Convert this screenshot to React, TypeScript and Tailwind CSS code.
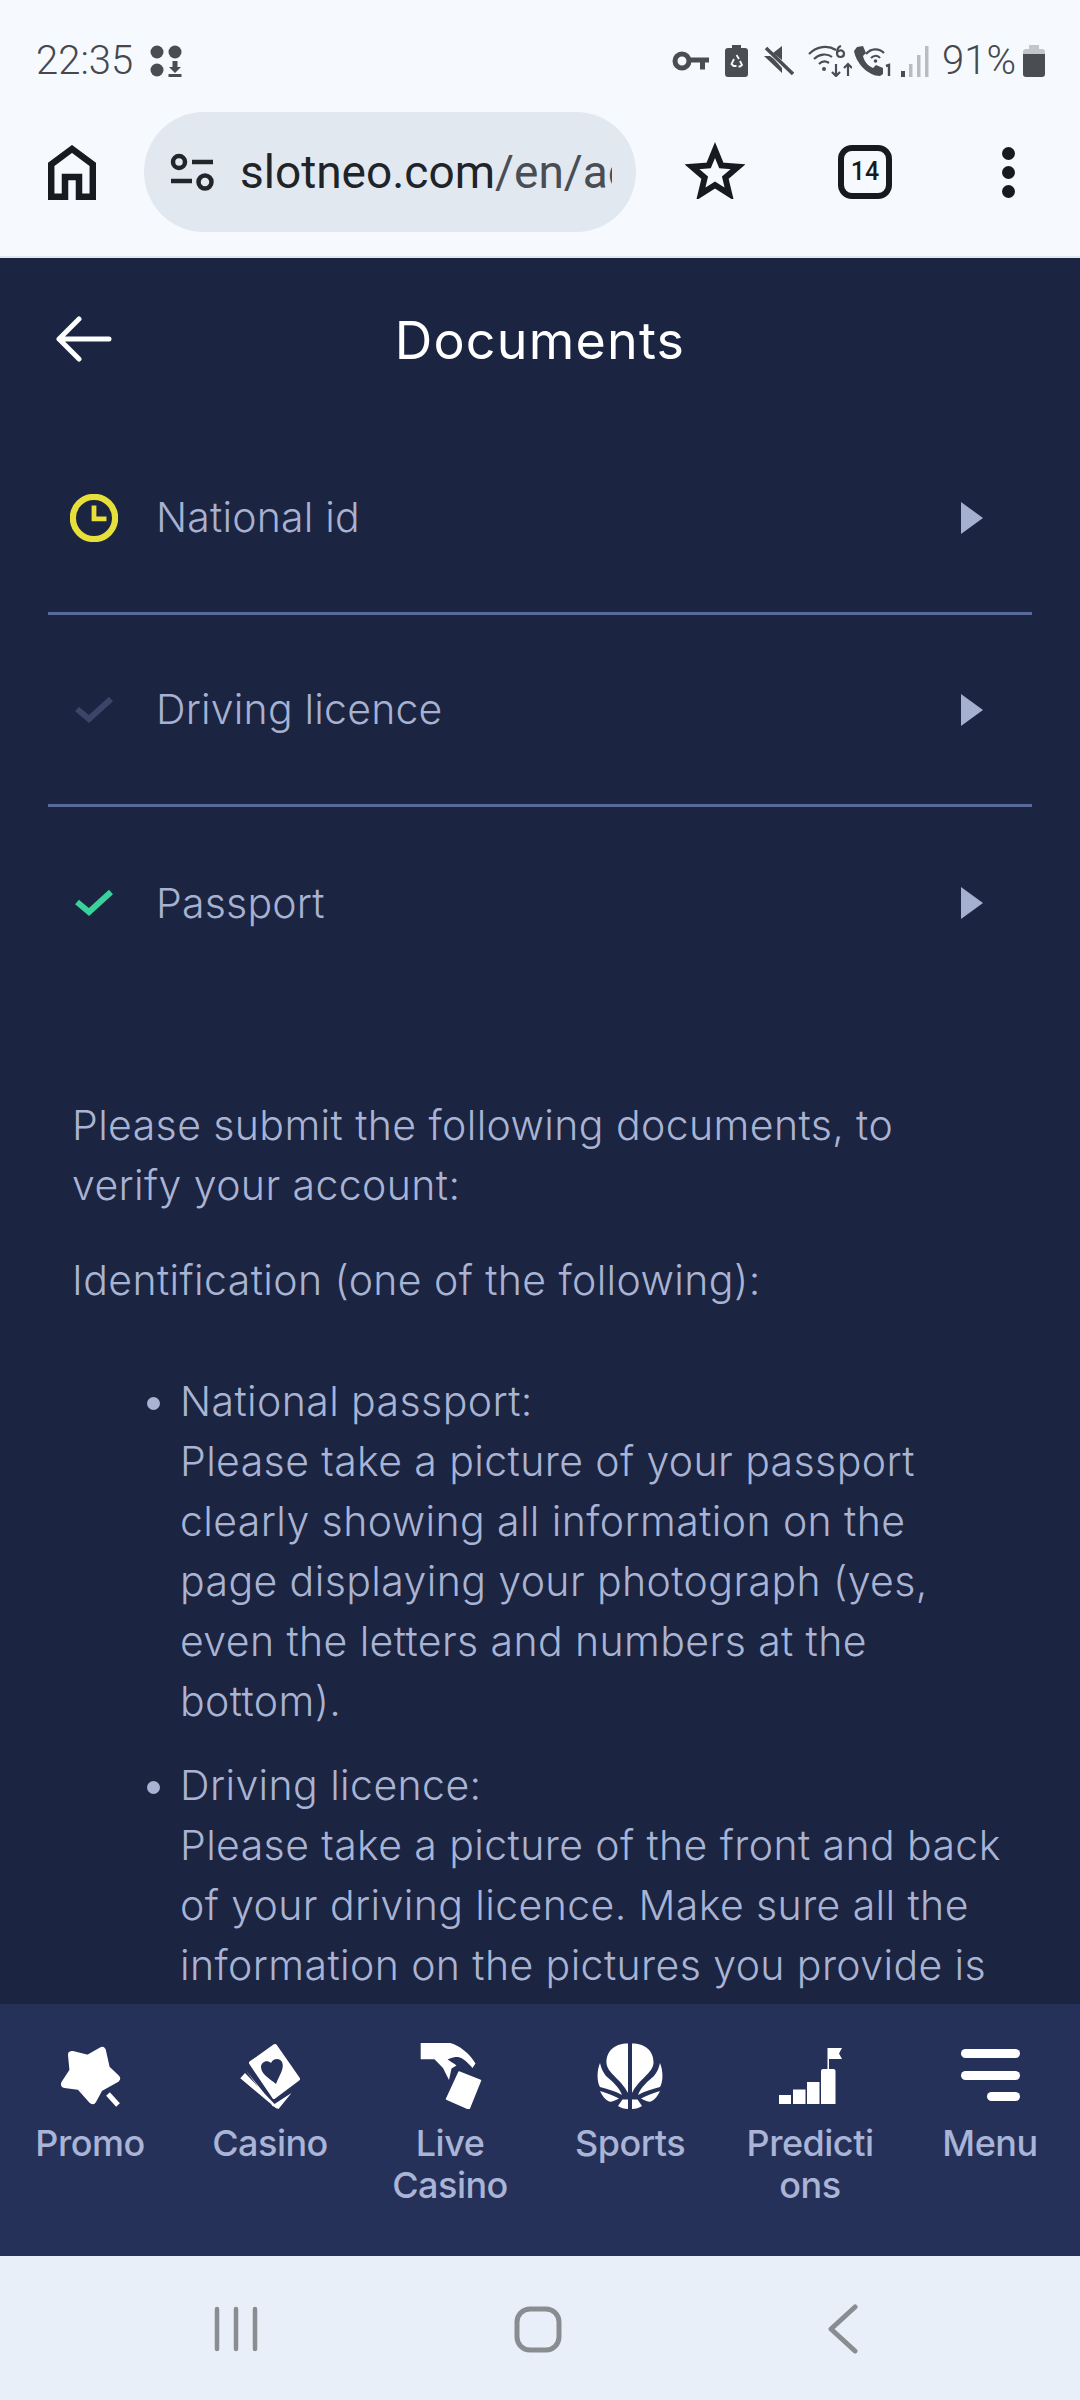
import React from 'react';

const bodyFont = "font-['Inter',sans-serif]";

function StatusLeft() {
  return (
    <div className="flex items-center">
      <span className="font-['Roboto',sans-serif] text-[40px] font-light leading-none text-[#45494e]">22:35</span>
      <svg className="ml-[16px]" width="34" height="32" viewBox="0 0 32 32" fill="#4a4d52">
        <circle cx="7" cy="7" r="6.5" />
        <circle cx="25" cy="7" r="6.5" />
        <circle cx="7" cy="25" r="6.5" />
        <path d="M22.5 16h5v6h3.5l-6 6-6-6h3.5zM18.5 29h13v3h-13z" />
      </svg>
    </div>
  );
}

function StatusRight() {
  return (
    <div className="flex items-center">
      {/* key */}
      <svg width="38" height="22" viewBox="0 0 38 22" fill="none" stroke="#4a4d52">
        <circle cx="10" cy="11" r="7" strokeWidth="5" />
        <path d="M17 7.500h20v5h-4v7h-5v-7h-11z" fill="#4a4d52" strokeWidth="0" />
      </svg>
      {/* battery saver */}
      <svg className="ml-[15px]" width="23" height="32" viewBox="0 0 23 32">
        <path d="M7 0h9v3h4a3 3 0 0 1 3 3v23a3 3 0 0 1-3 3H3a3 3 0 0 1-3-3V6a3 3 0 0 1 3-3h4z" fill="#4a4d52" />
        <path d="M11.500 10l2.500 4M9 14l-2.500 5 2 2h3M15 16l2 4-2 1.500h-1.500" fill="none" stroke="#f6f9fe" strokeWidth="1.800" />
      </svg>
      {/* mute */}
      <svg className="ml-[16px]" width="30" height="30" viewBox="0 0 30 30">
        <path d="M0 10h6l4 3 8 9v5zM9 7l9-7v14z" fill="#4a4d52" />
        <path d="M2 2l27 26" stroke="#4a4d52" strokeWidth="3.500" />
      </svg>
      {/* wifi with data */}
      <svg className="ml-[14px]" width="44" height="32" viewBox="0 0 44 32" fill="none" stroke="#4a4d52" strokeWidth="2.200">
        <path d="M1 9C9 1 20 0 28 5M6 14c5-5 13-6 18-2M11 19c3-3 7-3 10-1" />
        <circle cx="16" cy="24" r="2" fill="#4a4d52" stroke="none" />
        <path d="M33 1c-3 1-4 4-4 7 0 3 1.500 4 3.500 4s3.500-1.500 3.500-3.500S34 5 32 5.500 29 7 29 8" />
        <path d="M28 19v12M24 27l4 4 4-4M40 31V19M36 23l4-4 4 4" />
      </svg>
      {/* wifi call */}
      <svg className="ml-[2px]" width="37" height="32" viewBox="0 0 37 32">
        <path d="M3 2l6-1 3 7-3 3c1 5 5 10 10 12l3-3 7 3 0 6-3 2C14 31 2 18 0 6z" fill="#4a4d52" />
        <path d="M12 9c5-6 13-6 18-1M17 13c3-3 7-3 9 0" fill="none" stroke="#4a4d52" strokeWidth="2.200" />
        <circle cx="21.500" cy="16" r="1.800" fill="#4a4d52" />
        <path d="M32 21l3-1v11" fill="none" stroke="#4a4d52" strokeWidth="2.400" />
      </svg>
      {/* signal */}
      <svg className="ml-[10px]" width="28" height="31" viewBox="0 0 28 31">
        <rect x="0" y="25" width="4" height="6" fill="#4a4d52" />
        <rect x="8" y="18" width="3.500" height="13" fill="#b9bdc2" />
        <rect x="16" y="9" width="3.500" height="22" fill="#b9bdc2" />
        <rect x="24" y="0" width="3.500" height="31" fill="#b9bdc2" />
      </svg>
      <span className="ml-[13px] font-['Roboto',sans-serif] text-[40px] font-light leading-none text-[#45494e]">91%</span>
      {/* battery */}
      <svg className="ml-[7px]" width="22" height="32" viewBox="0 0 22 32">
        <path d="M6 0h10v4H6z" fill="#c3c6ca" />
        <path d="M3 4h16a3 3 0 0 1 3 3v3H0V7a3 3 0 0 1 3-3z" fill="#c3c6ca" />
        <path d="M0 9h22v20a3 3 0 0 1-3 3H3a3 3 0 0 1-3-3z" fill="#4a4d52" />
      </svg>
    </div>
  );
}

function BrowserBar() {
  return (
    <div className="flex h-[144px] items-start pl-[48px]">
      <svg className="mt-[33px]" width="48" height="55" viewBox="0 0 48 55" fill="none" stroke="#171b20" strokeWidth="6.500">
        <path d="M3.200 51.800V19.500L24 4l20.800 15.500v32.300H31V32H17v19.800z" />
      </svg>
      <div className="ml-[48px] flex h-[120px] w-[492px] items-center rounded-full bg-[#e2e8f0] pl-[26px] pr-[24px]">
        <svg className="shrink-0" width="44" height="38" viewBox="0 0 44 38" fill="none" stroke="#22262b" strokeWidth="4.500">
          <circle cx="9" cy="9" r="6" />
          <path d="M22 9h21M1 28h21" />
          <circle cx="35" cy="29" r="6.500" />
        </svg>
        <div className="ml-[26px] overflow-hidden whitespace-nowrap font-['Roboto',sans-serif] text-[46px] leading-none text-[#202428]">
          slotneo.com<span className="text-[#494e55]">/en/account/documents</span>
        </div>
      </div>
      <svg className="ml-[49px] mt-[29px]" width="60" height="58" viewBox="0 0 60 58" fill="none" stroke="#171b20" strokeWidth="6">
        <path d="M30 9l6.300 15.500 16.700 1.300-12.700 10.900 3.900 16.300L30 44l-14.200 9 3.900-16.300L7 25.800l16.700-1.300z" />
      </svg>
      <div className="ml-[93px] mt-[33px] flex h-[54px] w-[54px] items-center justify-center rounded-[14px] border-[6px] border-[#171b20] font-['Roboto',sans-serif] text-[25px] font-medium text-[#171b20]">
        14
      </div>
      <div className="ml-[110px] mt-[35px] flex flex-col gap-[6.500px]">
        <div className="h-[12.500px] w-[12.500px] rounded-full bg-[#171b20]" />
        <div className="h-[12.500px] w-[12.500px] rounded-full bg-[#171b20]" />
        <div className="h-[12.500px] w-[12.500px] rounded-full bg-[#171b20]" />
      </div>
    </div>
  );
}

function Triangle() {
  return (
    <svg width="22" height="32" viewBox="0 0 22 32" fill="#a5afd0">
      <path d="M0 0l22 16L0 32z" />
    </svg>
  );
}

function ClockIcon() {
  return (
    <svg width="48" height="48" viewBox="0 0 50 50" fill="none" stroke="#e7e03a">
      <circle cx="25" cy="25" r="22" strokeWidth="6.500" />
      <path d="M25 12v14h13" strokeWidth="5" />
    </svg>
  );
}

function CheckIcon({ color }: { color: string }) {
  return (
    <svg width="38" height="28" viewBox="0 0 38 28" fill="none" stroke={color} strokeWidth="6">
      <path d="M2 13l12 10L36 3" />
    </svg>
  );
}

function DocRow({ icon, label, divider }: { icon: React.ReactNode; label: string; divider?: boolean }) {
  return (
    <div className={`flex h-[192px] items-center pr-[49px] ${divider ? 'border-b-[3px] border-[#5a699b]' : ''}`}>
      <div className="flex w-[92px] justify-center">{icon}</div>
      <div className={`${bodyFont} ml-[16px] flex-1 text-[41px] font-light leading-none tracking-[0.2px] text-[#a7b1d1]`}>{label}</div>
      <Triangle />
    </div>
  );
}

function PromoIcon() {
  return (
    <svg width="66" height="66" viewBox="0 0 66 66" fill="#fff">
      <path d="M45 8L49 26 59 35.500 42 45 35.500 57 23 43 8 41 16.500 28 15 12 31 16z" stroke="#fff" strokeWidth="8" strokeLinejoin="round" />
      <path d="M51 51l10 11" stroke="#fff" strokeWidth="5" />
    </svg>
  );
}

function CasinoIcon() {
  return (
    <svg width="66" height="66" viewBox="0 0 66 66" fill="#fff">
      <path d="M38 3l23 33-24 18L14 20z" stroke="#fff" strokeWidth="4" strokeLinejoin="round" />
      <path d="M8.500 27l27 36 6 3 13-16-17 11L8 30l-4.700 5.300 37 31" />
      <path d="M39 41C33 36 24 31 24 24c0-5 6-8 10-4 2-5 9-5 11-1 3 6-3 14-6 22z" fill="#263159" />
    </svg>
  );
}

function LiveCasinoIcon() {
  return (
    <svg width="66" height="66" viewBox="0 0 66 66" fill="#fff">
      <path d="M3.700 0H33c9 2 20 11 25.500 20.500L55.500 25C51 20 46 14.500 41 14c-3.500 0-6 .5-10.500 2.500 3 2 5 3 9 6l-5 3-2.500 11.500L26 25 17.500 16.300H3.700z" />
      <path d="M42 29l21.500 8.500L52 66l-22.500-10z" stroke="#fff" strokeWidth="1.500" strokeLinejoin="round" />
    </svg>
  );
}

function SportsIcon() {
  return (
    <svg width="66" height="66" viewBox="0 0 66 66" fill="#fff">
      <path d="M31 .5C18 .5 9 8 9.500 20 10 30 24 36 31 50z" />
      <path d="M35 .5C48 .5 57 8 56.500 20 56 30 42 36 35 50z" />
      <path d="M3 20C0 27-.5 38 3 44c7 2 15 4 22 8-3-8-10-14-16-19-3-4-5-8-6-13z" />
      <path d="M63 20c3 7 3.500 18 0 24-7 2-15 4-22 8 3-8 10-14 16-19 3-4 5-8 6-13z" />
      <path d="M3 48c6 2 13 4 19 7.500-4 2.500-8 3.500-10 3-4-2-7-6-9-10.500z" />
      <path d="M63 48c-6 2-13 4-19 7.500 4 2.500 8 3.500 10 3 4-2 7-6 9-10.500z" />
      <path d="M21 63l4.500-6.500H31V66c-4 0-7-1-10-3z" />
      <path d="M45 63l-4.500-6.500H35V66c4 0 7-1 10-3z" />
    </svg>
  );
}

function PredictionsIcon() {
  return (
    <svg width="66" height="66" viewBox="0 0 66 66" fill="#fff">
      <path d="M2 52h12v9H2zM16 46.500h12.500V61H16zM30 39h12.500v22H30zM44 28a2 2 0 0 1 2-2h10.500a2 2 0 0 1 2 2v33H44z" />
      <path d="M50.500 5h1.500v21h-1.500zM52 5h13l-3 5.500 3 5.500H52z" />
    </svg>
  );
}

function MenuIcon() {
  return (
    <svg width="66" height="66" viewBox="0 0 66 66" fill="#fff">
      <rect x="4" y="6" width="59" height="9" rx="4.500" />
      <rect x="4" y="28" width="59" height="9" rx="4.500" />
      <rect x="30" y="49" width="33" height="9" rx="4.500" />
    </svg>
  );
}

const navItems = [
  { label: 'Promo', icon: <PromoIcon /> },
  { label: 'Casino', icon: <CasinoIcon /> },
  { label: 'Live Casino', icon: <LiveCasinoIcon /> },
  { label: 'Sports', icon: <SportsIcon /> },
  { label: 'Predictions', icon: <PredictionsIcon /> },
  { label: 'Menu', icon: <MenuIcon /> },
];

export default function App() {
  return (
    <div className="flex h-[2400px] w-[1080px] flex-col overflow-hidden bg-[#1b2440]">
      {/* system + browser chrome */}
      <div className="shrink-0 border-b-[2px] border-[#e2e8f0] bg-[#f6f9fe]">
        <div className="flex h-[112px] items-end justify-between pb-[31px] pl-[36px] pr-[35px]">
          <StatusLeft />
          <StatusRight />
        </div>
        <BrowserBar />
      </div>

      <div className="min-h-0 flex-1 overflow-hidden">
        <div className="relative flex h-[165px] items-center justify-center">
          <svg className="absolute left-[56px] top-[58px]" width="56" height="46" viewBox="0 0 56 46" fill="none" stroke="#fff" strokeWidth="5" strokeLinecap="round" strokeLinejoin="round">
            <path d="M53 23H3M23 3L3 23l20 20" />
          </svg>
          <h1 className={`${bodyFont} text-[52px] font-normal leading-none tracking-[1.2px] text-white`}>Documents</h1>
        </div>

        <div className="px-[48px]">
          <DocRow icon={<ClockIcon />} label="National id" divider />
          <DocRow icon={<CheckIcon color="#3b4568" />} label="Driving licence" divider />
          <DocRow icon={<CheckIcon color="#3ad29a" />} label="Passport" />
        </div>

        <div className={`${bodyFont} pl-[72px] pr-[72px] pt-[96px] text-[41px] font-light leading-[60px] tracking-[0.4px] text-[#a9b3d3]`}>
          <p>
            Please submit the following documents, to
            <br />
            verify your account:
          </p>
          <p className="mt-[35px]">Identification (one of the following):</p>
          <ul className="mt-[61px] list-disc pl-[108px] marker:text-[#a9b3d3]">
            <li>
              National passport:
              <br />
              Please take a picture of your passport clearly showing all information on the page displaying your photograph (yes, even the letters and numbers at the bottom).
            </li>
            <li className="mt-[24px]">
              Driving licence:
              <br />
              Please take a picture of the front and back of your driving licence. Make sure all the information on the pictures you provide is clearly visible.
            </li>
          </ul>
        </div>
      </div>

      {/* bottom nav */}
      <nav className="flex h-[252px] shrink-0 bg-[#263159] pt-[39px]">
        {navItems.map((item) => (
          <div key={item.label} className="flex w-[180px] flex-col items-center">
            {item.icon}
            <div className="mt-[13px] w-[134px] break-words text-center font-['Inter',sans-serif] text-[36px] font-medium leading-[42px] tracking-[-0.5px] text-[#a9b4d6]">
              {item.label}
            </div>
          </div>
        ))}
      </nav>

      {/* android nav */}
      <div className="flex h-[144px] shrink-0 items-center bg-[#e8eff8] pl-[214px] pt-[2px]">
        <svg width="44" height="46" viewBox="0 0 44 46" fill="none" stroke="#898c91" strokeWidth="4.500" strokeLinecap="round">
          <path d="M3 3v40M22 3v40M41 3v40" />
        </svg>
        <svg className="ml-[256px]" width="48" height="47" viewBox="0 0 48 47" fill="none" stroke="#898c91" strokeWidth="5">
          <rect x="3" y="3" width="42" height="41" rx="13" />
        </svg>
        <svg className="ml-[266px]" width="30" height="50" viewBox="0 0 30 50" fill="none" stroke="#898c91" strokeWidth="5" strokeLinecap="round" strokeLinejoin="round">
          <path d="M27 3L3 25l24 22" />
        </svg>
      </div>
    </div>
  );
}
